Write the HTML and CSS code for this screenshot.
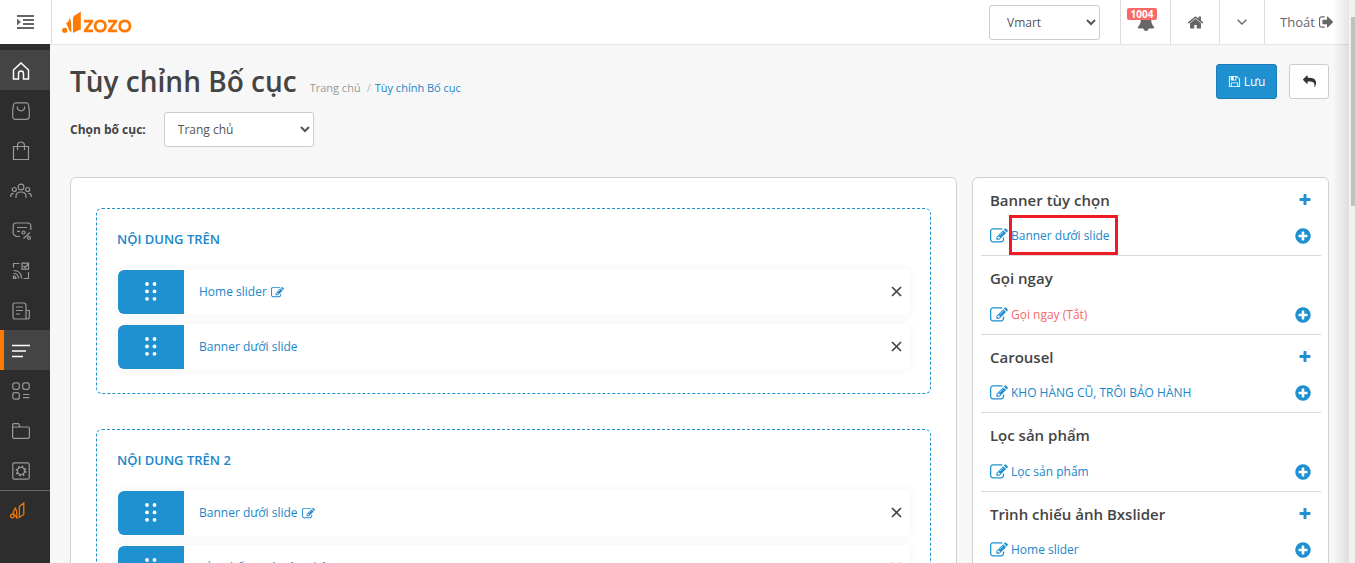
FILE: index.html
```html
<!DOCTYPE html>
<html lang="vi">
<head>
<meta charset="utf-8">
<title>Tùy chỉnh Bố cục</title>
<link rel="stylesheet" href="styles.css">
</head>
<body>
<svg class="sprite" aria-hidden="true">
<symbol id="plus" viewBox="0 0 1792 1792"><path d="M1600 736v192q0 40-28 68t-68 28h-416v416q0 40-28 68t-68 28h-192q-40 0-68-28t-28-68v-416h-416q-40 0-68-28t-28-68v-192q0-40 28-68t68-28h416v-416q0-40 28-68t68-28h192q40 0 68 28t28 68v416h416q40 0 68 28t28 68z"/></symbol>
<symbol id="plus-circle" viewBox="0 0 1792 1792"><path d="M1344 960v-128q0-26-19-45t-45-19h-256v-256q0-26-19-45t-45-19h-128q-26 0-45 19t-19 45v256h-256q-26 0-45 19t-19 45v128q0 26 19 45t45 19h256v256q0 26 19 45t45 19h128q26 0 45-19t19-45v-256h256q26 0 45-19t19-45zm320-64q0 209-103 385.5t-279.5 279.5-385.5 103-385.5-103-279.5-279.5-103-385.5 103-385.5 279.5-279.5 385.5-103 385.5 103 279.5 279.5 103 385.5z"/></symbol>
<symbol id="edit" viewBox="0 0 1792 1792"><path d="M888 1184l116-116-152-152-116 116v56h96v96h56zm440-720q-16-16-33 1l-350 350q-17 17-1 33t33-1l350-350q17-17 1-33zm80 594v190q0 119-84.5 203.5t-203.5 84.5h-832q-119 0-203.5-84.5t-84.5-203.5v-832q0-119 84.5-203.5t203.5-84.5h832q63 0 117 25 15 7 18 23 3 17-9 29l-49 49q-14 14-32 8-23-6-45-6h-832q-66 0-113 47t-47 113v832q0 66 47 113t113 47h832q66 0 113-47t47-113v-126q0-13 9-22l64-64q15-15 35-7t20 29zm-96-738l288 288-672 672h-288v-288zm444 132l-92 92-288-288 92-92q28-28 68-28t68 28l152 152q28 28 28 68t-28 68z"/></symbol>
<symbol id="close" viewBox="0 0 11 11"><path d="M1 1l9 9M10 1l-9 9" fill="none" stroke="currentColor" stroke-width="1.7"/></symbol>
<symbol id="grip" viewBox="0 0 12 20"><circle cx="2" cy="2" r="1.9"/><circle cx="9.500" cy="2" r="1.9"/><circle cx="2" cy="9.400" r="1.9"/><circle cx="9.500" cy="9.400" r="1.9"/><circle cx="2" cy="16.800" r="1.9"/><circle cx="9.500" cy="16.800" r="1.9"/></symbol>
</svg>

<header class="topbar">
  <button class="topbar-toggle" aria-label="Menu"><svg width="17" height="14" viewBox="0 0 17 14"><path d="M0 0h17v2H0zM6 4h11v2H6zM6 8h11v2H6zM0 12h17v2H0zM0 3.6L4 7 0 10.400z"/></svg></button>
  <a class="logo" href="#" aria-label="zozo">
    <svg width="71" height="23" viewBox="0 0 71 23"><g fill="#ff7a00"><circle cx="2.700" cy="19.300" r="2.600"/><path d="M4 12.500Q7.500 10 7.500 6.500Q9.300 10 9.300 14V21.500Q7.500 20.500 6.500 17.500Q5.500 14.500 4 12.500zM11 7Q11.500 4.500 15 3Q18 1.500 18.800 0.300V18.500Q15.500 19 11 22z"/></g><g fill="none" stroke="#ff7a00" stroke-width="2.800"><path stroke-linejoin="round" d="M22 10.200h8l-7 9.600h8M46 10.200h8l-7 9.600h8"/><circle cx="38.300" cy="15" r="5.200"/><circle cx="62.800" cy="15" r="5.200"/></g></svg>
  </a>
  <select class="select shop" aria-label="Cửa hàng"><option>Vmart</option></select>
  <nav class="topnav">
    <a class="topnav-item bell" href="#" aria-label="Thông báo"><svg width="18" height="18" viewBox="0 0 1792 1792"><path d="M1728 1408q0 52-38 90t-90 38h-448q0 106-75 181t-181 75-181-75-75-181h-448q-52 0-90-38t-38-90q50-42 91-88t85-119.500 74.500-158.500 50-206 19.500-260q0-152 117-282.500t307-158.500q-8-19-8-39 0-40 28-68t68-28 68 28 28 68q0 20-8 39 190 28 307 158.500t117 282.500q0 139 19.500 260t50 206 74.500 158.500 85 119.500 91 88z"/></svg><span class="badge">1004</span></a>
    <a class="topnav-item house" href="#" aria-label="Trang chủ"><svg width="17" height="17" viewBox="0 0 1792 1792"><path d="M1472 992v480q0 26-19 45t-45 19h-384v-384h-256v384h-384q-26 0-45-19t-19-45v-480q0-1 .5-3t.5-3l575-474 575 474q1 2 1 6zm223-69l-62 74q-8 9-21 11h-3q-13 0-21-7l-692-577-692 577q-12 8-24 7-13-2-21-11l-62-74q-8-10-7-23.500t11-21.500l719-599q32-26 76-26t76 26l244 204v-195q0-14 9-23t23-9h192q14 0 23 9t9 23v408l219 182q10 8 11 21.500t-7 23.500z"/></svg></a>
    <button class="topnav-item more" aria-label="Thêm"><svg width="10" height="6" viewBox="0 0 10 6"><path d="M.7.7L5 5 9.300.7" fill="none" stroke="currentColor" stroke-width="1.300"/></svg></button>
    <a class="topnav-item logout" href="#">Thoát <svg width="16" height="16" viewBox="0 0 1700 1792"><path d="M704 1440q0 4 1 20t.5 26.500-3 23.500-10 19.500-20.500 6.500h-320q-119 0-203.500-84.500t-84.500-203.500v-704q0-119 84.500-203.500t203.500-84.500h320q13 0 22.500 9.500t9.500 22.500q0 4 1 20t.5 26.500-3 23.500-10 19.500-20.500 6.500h-320q-66 0-113 47t-47 113v704q0 66 47 113t113 47h312l11.500 1 11.500 3 8 5.500 7 9 2 13.500zm928-544q0 26-19 45l-544 544q-19 19-45 19t-45-19-19-45v-288h-448q-26 0-45-19t-19-45v-384q0-26 19-45t45-19h448v-288q0-26 19-45t45-19 45 19l544 544q19 19 19 45z"/></svg></a>
  </nav>
</header>

<div class="body">
  <nav class="sidebar">
    <a class="side-item active" href="#" aria-label="Tổng quan"><svg width="18" height="18" viewBox="0 0 18 18"><path d="M1.500 8L9 1l7.500 7v9h-5v-5.500a2.500 2.500 0 0 0-5 0V17h-5z"/></svg></a>
    <a class="side-item" href="#" aria-label="Đơn hàng"><svg width="18" height="18" viewBox="0 0 18 18"><path d="M3.500.8h11q1.800 0 2 2l.8 5.500v6q0 3-3 3H3.700q-3 0-3-3v-6l.8-5.500q.2-2 2-2zM5.300 4.500q0 4.300 3.700 4.300t3.700-4.300"/></svg></a>
    <a class="side-item" href="#" aria-label="Sản phẩm"><svg width="18" height="20" viewBox="0 0 18 20"><path d="M1.500 5.500h15v13h-15zM5.500 9V4.500a3.500 3.500 0 0 1 7 0V9"/></svg></a>
    <a class="side-item wide" href="#" aria-label="Khách hàng"><svg width="22" height="16" viewBox="0 0 22 16"><circle cx="11" cy="4" r="2.900"/><circle cx="4.300" cy="6.500" r="2"/><circle cx="17.700" cy="6.500" r="2"/><path d="M6 15v-1.500q0-4.500 5-4.500t5 4.500V15M.7 14v-1q0-2.700 3-2.700M21.300 14v-1q0-2.700-3-2.700"/></svg></a>
    <a class="side-item promo" href="#" aria-label="Khuyến mãi"><svg width="20" height="18" viewBox="0 0 20 18"><path d="M8 14.500H4L1.200 12V4Q1.200 1 4 1h12q2.800 0 2.800 3v4M5 5.500h10M5 9.300h3M18 10.500l-6.500 6"/><circle cx="11.500" cy="10.500" r="1.500"/><circle cx="17" cy="15.800" r="1.500"/></svg></a>
    <a class="side-item" href="#" aria-label="Kênh bán"><svg width="18" height="18" viewBox="0 0 18 18"><path d="M7.500 1.500h-6v4M16.500 10v6.500h-5M10 1.200h6.500v6H10zM11.500 4l1.500 1.500 3-3.500M1.500 8.500q8 0 8 8M1.500 11.500q5 0 5 5M1.500 14q2.500 0 2.500 2.500H1.500z"/></svg></a>
    <a class="side-item" href="#" aria-label="Bài viết"><svg width="18" height="18" viewBox="0 0 18 18"><path d="M3 1h8.500Q14 1 14 3.500V17H3q-2 0-2-2V3q0-2 2-2zM14 8.500h3.300v6.500q0 2-2 2H14M4 5h7M4 8.500h7M4 12h4"/></svg></a>
    <a class="side-item active current" href="#" aria-label="Bố cục"><svg width="18" height="14" viewBox="0 0 18 14"><path d="M0 1.500h18M0 7h14M0 12.500h11"/></svg></a>
    <a class="side-item" href="#" aria-label="Ứng dụng"><svg width="18" height="18" viewBox="0 0 18 18"><rect x=".8" y=".8" width="6.500" height="6.500" rx="2"/><rect x="10.700" y=".8" width="6.500" height="6.500" rx="2"/><rect x=".8" y="10.700" width="6.500" height="6.500" rx="2"/><path d="M11 12.500h6.500M11 15.700h6.500"/></svg></a>
    <a class="side-item" href="#" aria-label="Tệp tin"><svg width="18" height="16" viewBox="0 0 18 16"><path d="M.6 14V2q0-1.400 1.400-1.400h4.500L8 4h8q1.400 0 1.400 1.400V14q0 1.400-1.400 1.400H2Q.6 15.400.6 14zM.6 4H8"/></svg></a>
    <a class="side-item" href="#" aria-label="Cấu hình"><svg width="18" height="18" viewBox="0 0 18 18"><rect x=".8" y=".8" width="16.400" height="16.400" rx="1.500"/><circle cx="9" cy="9" r="3.500"/><circle cx="9" cy="9" r="4.600" stroke-width="1.800" stroke-dasharray="1.800 1.810"/></svg></a>
    <a class="side-item brand" href="#" aria-label="zozo"><svg width="15" height="17" viewBox="0 0 15 17"><circle cx="2.300" cy="14" r="1.800"/><path d="M3 10.500L5.300 6Q7 9 7 16zM9.300 4.500L13.800 1v11.500L9.300 15.500z"/></svg></a>
  </nav>

  <main class="content">
    <div class="page-head">
      <h1>Tùy chỉnh Bố cục</h1>
      <nav class="crumbs"><a class="crumb-parent" href="#">Trang chủ</a><span class="crumb-sep">/</span><a href="#">Tùy chỉnh Bố cục</a></nav>
      <div class="actions">
        <button class="btn btn-save"><svg width="13" height="13" viewBox="0 0 1792 1792"><path d="M512 1536h768v-384h-768v384zm896 0h128v-896q0-14-10-38.500t-20-34.500l-281-281q-10-10-34-20t-39-10v416q0 40-28 68t-68 28h-576q-40 0-68-28t-28-68v-416h-128v1280h128v-416q0-40 28-68t68-28h832q40 0 68 28t28 68v416zm-384-928v-320q0-13-9.500-22.500t-22.500-9.500h-192q-13 0-22.500 9.500t-9.500 22.500v320q0 13 9.500 22.500t22.500 9.500h192q13 0 22.500-9.500t9.500-22.500zm640 32v928q0 40-28 68t-68 28h-1344q-40 0-68-28t-28-68v-1344q0-40 28-68t68-28h928q40 0 88 20t76 48l280 280q28 28 48 76t20 88z"/></svg>Lưu</button>
        <button class="btn" aria-label="Quay lại"><svg width="13" height="13" viewBox="0 0 1792 1792"><path d="M1792 1120q0 166-127 451-3 7-10.500 24t-13.500 30-13 22q-12 17-28 17-15 0-23.500-10t-8.500-25q0-9 2.500-26.500t2.500-23.500q5-68 5-123 0-101-17.500-181t-48.500-138.500-80-101-105.500-69.500-133-42.500-154-21.500-175.500-6h-224v256q0 26-19 45t-45 19-45-19l-512-512q-19-19-19-45t19-45l512-512q19-19 45-19t45 19 19 45v256h224q713 0 875 403 53 134 53 333z"/></svg></button>
      </div>
    </div>
    <div class="picker">
      <label for="layout">Chọn bố cục:</label>
      <select class="select" id="layout"><option>Trang chủ</option></select>
    </div>

    <div class="columns">
      <div class="panel zones">
        <section class="zone">
          <h2>NỘI DUNG TRÊN</h2>
          <div class="card"><span class="handle"><svg width="12" height="20"><use href="#grip"/></svg></span><a href="#">Home slider <svg width="13" height="13"><use href="#edit"/></svg></a><button class="remove" aria-label="Xóa"><svg width="11" height="11"><use href="#close"/></svg></button></div>
          <div class="card"><span class="handle"><svg width="12" height="20"><use href="#grip"/></svg></span><a href="#">Banner dưới slide</a><button class="remove" aria-label="Xóa"><svg width="11" height="11"><use href="#close"/></svg></button></div>
        </section>
        <section class="zone">
          <h2>NỘI DUNG TRÊN 2</h2>
          <div class="card"><span class="handle"><svg width="12" height="20"><use href="#grip"/></svg></span><a href="#">Banner dưới slide <svg width="13" height="13"><use href="#edit"/></svg></a><button class="remove" aria-label="Xóa"><svg width="11" height="11"><use href="#close"/></svg></button></div>
          <div class="card"><span class="handle"><svg width="12" height="20"><use href="#grip"/></svg></span><a href="#">Sản phẩm mới cập nhật <svg width="13" height="13"><use href="#edit"/></svg></a><button class="remove" aria-label="Xóa"><svg width="11" height="11"><use href="#close"/></svg></button></div>
        </section>
      </div>

      <aside class="panel modules">
        <section class="module">
          <div class="module-head"><h3>Banner tùy chọn</h3><button class="add" aria-label="Tạo mới"><svg width="14" height="14"><use href="#plus"/></svg></button></div>
          <div class="module-row"><svg width="18" height="18"><use href="#edit"/></svg><a class="marked" href="#">Banner dưới slide</a><button class="add" aria-label="Thêm"><svg width="18" height="18"><use href="#plus-circle"/></svg></button></div>
        </section>
        <section class="module">
          <div class="module-head"><h3>Gọi ngay</h3></div>
          <div class="module-row"><svg width="18" height="18"><use href="#edit"/></svg><a class="off" href="#">Gọi ngay (Tắt)</a><button class="add" aria-label="Thêm"><svg width="18" height="18"><use href="#plus-circle"/></svg></button></div>
        </section>
        <section class="module">
          <div class="module-head"><h3>Carousel</h3><button class="add" aria-label="Tạo mới"><svg width="14" height="14"><use href="#plus"/></svg></button></div>
          <div class="module-row"><svg width="18" height="18"><use href="#edit"/></svg><a href="#">KHO HÀNG CŨ, TRÔI BẢO HÀNH</a><button class="add" aria-label="Thêm"><svg width="18" height="18"><use href="#plus-circle"/></svg></button></div>
        </section>
        <section class="module">
          <div class="module-head"><h3>Lọc sản phẩm</h3></div>
          <div class="module-row"><svg width="18" height="18"><use href="#edit"/></svg><a href="#">Lọc sản phẩm</a><button class="add" aria-label="Thêm"><svg width="18" height="18"><use href="#plus-circle"/></svg></button></div>
        </section>
        <section class="module">
          <div class="module-head"><h3>Trình chiếu ảnh Bxslider</h3><button class="add" aria-label="Tạo mới"><svg width="14" height="14"><use href="#plus"/></svg></button></div>
          <div class="module-row"><svg width="18" height="18"><use href="#edit"/></svg><a href="#">Home slider</a><button class="add" aria-label="Thêm"><svg width="18" height="18"><use href="#plus-circle"/></svg></button></div>
        </section>
      </aside>
    </div>
  </main>
</div>
<div class="edge-shade"></div>
<div class="scrollbar"><div class="scroll-thumb"></div></div>
</body>
</html>
```
FILE: styles.css
```css
* { box-sizing: border-box; }
body {
  margin: 0;
  height: 100vh;
  overflow: hidden;
  padding-right: 6px;
  display: flex;
  flex-direction: column;
  background: #f7f7f7;
  color: #444;
  font: 12px/20px "Open Sans", "Noto Sans", sans-serif;
}
a { color: #2086c8; text-decoration: none; }
svg { fill: currentColor; flex: none; }
button { margin: 0; padding: 0; border: 0; background: none; color: inherit; font: inherit; }
h1, h2, h3 { margin: 0; }
.sprite { position: absolute; width: 0; height: 0; }

.topbar {
  flex: none;
  display: flex;
  align-items: center;
  height: 45px;
  background: #fff;
  border-bottom: 1px solid #e6e6e6;
  color: #666;
}
.topbar-toggle {
  width: 52px;
  height: 44px;
  border-right: 1px solid #ddd;
  display: grid;
  place-items: center;
}
.logo { display: flex; margin-left: 10px; }
.select {
  height: 35px;
  padding: 0 0 0 9px;
  border: 1px solid #ccc;
  border-radius: 3px;
  background: #fff;
  color: #555;
  font: inherit;
}
.shop { width: 111px; margin-left: auto; padding-left: 13px; }
.topnav { display: flex; height: 44px; margin-left: 20px; }
.topnav-item {
  display: flex;
  align-items: center;
  justify-content: center;
  border-left: 1px solid #ddd;
  color: #666;
}
.bell { position: relative; width: 50px; }
.badge {
  position: absolute;
  top: 8px;
  left: 6px;
  width: 30px;
  border-radius: 2px;
  background: #f96868;
  color: #fff;
  font-size: 10px;
  line-height: 12px;
  font-weight: 700;
  text-align: center;
}
.house { width: 49px; }
.more { width: 45px; }
.logout { width: 85px; gap: 3px; font-size: 13px; }

.body { flex: 1; display: flex; min-height: 0; }
.sidebar {
  flex: none;
  width: 50px;
  margin-top: -1px;
  padding-top: 6px;
  background: #2d2d2d;
}
.side-item {
  display: flex;
  align-items: center;
  height: 40px;
  padding-left: 12px;
  padding-top: 2px;
  color: #999;
}
.side-item svg {
  fill: none;
  stroke: currentColor;
  stroke-width: 1.2;
}
.side-item.wide { padding-left: 10px; }
.side-item.active { background: #444; color: #fff; }
.side-item.active svg { stroke-width: 1.5; }
.side-item.current { padding-left: 8px; border-left: 4px solid #ff7a00; }
.side-item.brand { border-top: 1px solid #666; padding: 0 0 0 10px; color: #ff7a00; }

.content { flex: 1; min-width: 0; padding: 19px 20px 0; }
.page-head { display: flex; height: 35px; }
h1 { font-size: 28px; line-height: 35px; font-weight: 600; }
.crumbs { margin: 14px 0 0 13px; font-size: 11px; }
.crumb-parent { color: #999; }
.crumb-sep { margin: 0 4px 0 6px; color: #bbb; }
.actions { margin-left: auto; display: flex; gap: 12px; }
.btn {
  display: flex;
  align-items: center;
  justify-content: center;
  gap: 3px;
  width: 40px;
  height: 35px;
  border: 1px solid #ccc;
  border-radius: 3px;
  background: #fff;
  color: #333;
}
.btn-save { width: 61px; border-color: #1a7db8; background: #1f91d0; color: #fff; }
.picker { display: flex; align-items: center; gap: 18px; margin-top: 13px; }
.picker label { font-weight: 700; }
.picker .select { width: 150px; }

.columns {
  display: grid;
  grid-template-columns: 71.3fr 28.7fr;
  gap: 15px;
  margin-top: 30px;
}
.panel { border: 1px solid #d0d0d0; border-radius: 6px; background: #fff; }
.zones { padding: 30px 25px; display: flex; flex-direction: column; gap: 35px; }
.zone { padding: 20px 20px 23px; border: 1px dashed #1f91d0; border-radius: 6px; }
.zone h2 { margin-bottom: 20px; color: #2086c8; font-size: 13px; line-height: 20px; font-weight: 600; }
.card {
  display: flex;
  align-items: center;
  height: 46px;
  padding: 1px 8px 1px 1px;
  border-radius: 5px;
  background: #fff;
  box-shadow: 0 0 10px rgba(0, 0, 0, 0.06);
}
.card + .card { margin-top: 9px; }
.card a { display: flex; align-items: center; gap: 4px; margin-left: 15px; }
.handle {
  width: 66px;
  height: 44px;
  display: grid;
  place-items: center;
  border-radius: 6px 0 0 6px;
  background: #1f91d0;
  color: #fff;
}
.remove { display: flex; margin-left: auto; padding-bottom: 2px; color: #444; }

.modules { padding: 0 7px 0 8px; }
.module { padding: 0 9px 4px; border-bottom: 1px solid #d9d9d9; }
.module-head { display: flex; align-items: center; height: 44px; }
.module:nth-child(odd) .module-head { height: 43px; }
.module h3 { font-size: 15px; line-height: 20px; font-weight: 600; }
.module-row { display: flex; align-items: center; gap: 3px; height: 30px; color: #1f91d0; }
.add { display: flex; margin-left: auto; color: #1f91d0; }
.off { color: #f96868; }
.marked { position: relative; }
.marked::after {
  content: "";
  position: absolute;
  inset: -11px -8px -9px -2px;
  border: 3px solid #ed1c24;
}

.edge-shade {
  position: absolute;
  top: 0;
  right: 6px;
  bottom: 0;
  width: 16px;
  background: linear-gradient(to right, transparent, rgba(0, 0, 0, 0.1));
}
.scrollbar { position: absolute; top: 0; right: 0; bottom: 0; width: 6px; padding-top: 17px; background: #f1f1f1; }
.scroll-thumb { height: 189px; margin-left: 2px; background: #c1c1c1; }
```
